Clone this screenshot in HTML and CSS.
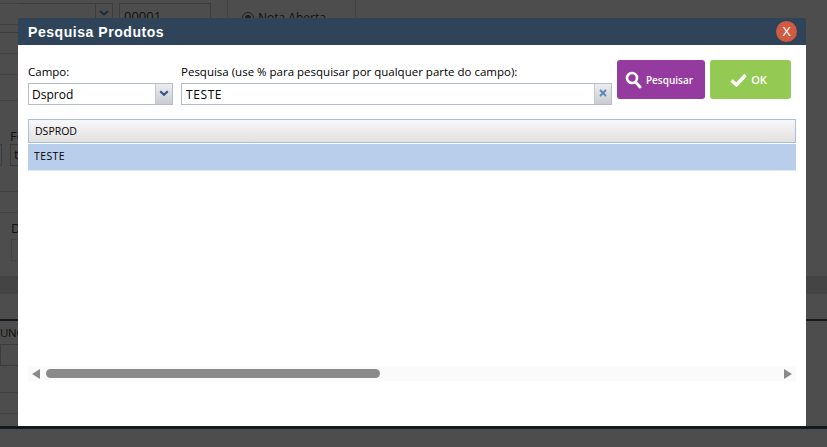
FILE: index.html
```html
<!DOCTYPE html>
<html lang="pt">
<head>
<meta charset="utf-8">
<title>Pesquisa Produtos</title>
<link rel="stylesheet" href="styles.css">
</head>
<body>
<div class="page">
  <div class="bg-top">
    <span class="bg-box bg-combo"><span class="bg-addon"><svg class="bg-arrow" width="10" height="6" viewBox="0 0 10 6"><path d="M1 1l4 3.5L9 1" fill="none" stroke="#1e2a3e" stroke-width="2"/></svg></span></span>
    <span class="bg-box bg-num">00001</span>
    <span class="bg-radio"><i class="bg-dot"></i>Nota Aberta</span>
    <i class="bg-v v1"></i>
    <i class="bg-v v2"></i>
  </div>
  <div class="bg-line l0"></div>
  <div class="bg-line l1"></div>
  <div class="bg-line l2"></div>
  <div class="bg-line l3"></div>
  <div class="bg-line l6"></div>
  <div class="bg-line l7"></div>
  <div class="bg-line l8"></div>
  <div class="bg-text t1">Fo</div>
  <div class="bg-box b1"></div>
  <div class="bg-box b2">t</div>
  <div class="bg-text t2">D</div>
  <div class="bg-box b3"></div>
  <div class="bg-band"></div>
  <div class="bg-dark d1"></div>
  <div class="bg-text t3">UNC</div>
  <div class="bg-box b4"></div>
  <div class="bg-line l4"></div>
  <div class="bg-line l5"></div>
  <div class="bg-dark d2"></div>
</div>
<div class="modal">
  <header class="modal-head">
    <h1>Pesquisa Produtos</h1>
    <span class="close">X</span>
  </header>
  <div class="modal-body">
    <div class="form">
      <div class="field campo">
        <label>Campo:</label>
        <div class="input">
          <span class="value">Dsprod</span>
          <span class="addon"><svg width="10" height="7" viewBox="0 0 10 7"><path d="M1.2 1.2L5 4.8l3.8-3.6" fill="none" stroke="#2f5288" stroke-width="2"/></svg></span>
        </div>
      </div>
      <div class="field pesquisa">
        <label>Pesquisa (use % para pesquisar por qualquer parte do campo):</label>
        <div class="input">
          <span class="value caps">TESTE</span>
          <span class="addon"><svg width="8" height="8" viewBox="0 0 8 8"><path d="M1 1l6 6M7 1L1 7" fill="none" stroke="#5b85b8" stroke-width="1.8"/></svg></span>
        </div>
      </div>
      <button class="btn purple"><svg width="17" height="18" viewBox="0 0 17 18"><circle cx="7" cy="7" r="5" fill="none" stroke="#fff" stroke-width="2.6"/><path d="M10.5 11l4.5 5" stroke="#fff" stroke-width="3" stroke-linecap="round"/></svg>Pesquisar</button>
      <button class="btn green"><svg width="17" height="14" viewBox="0 0 17 14"><path d="M1.5 7.5l5 4.5L15.5 2" fill="none" stroke="#fff" stroke-width="3.4"/></svg>OK</button>
    </div>
    <div class="grid">
      <div class="grid-head">DSPROD</div>
      <div class="grid-row">TESTE</div>
    </div>
    <div class="scrollbar">
      <svg class="arrow" width="8" height="10" viewBox="0 0 8 10"><path d="M8 0v10L0 5z" fill="#8a8a8a"/></svg>
      <div class="track"><div class="thumb"></div></div>
      <svg class="arrow" width="8" height="10" viewBox="0 0 8 10"><path d="M0 0v10l8-5z" fill="#8a8a8a"/></svg>
    </div>
  </div>
</div>
</body>
</html>
```
FILE: styles.css
```css
html, body { margin: 0; height: 100%; overflow: hidden; }
body { background: #4d4d4d; font-family: "Open Sans", "Noto Sans", sans-serif; font-size: 12px; color: #000; }
.page { position: fixed; inset: 0; background: #4d4d4d; overflow: hidden; color: #111; }
.bg-top { display: flex; height: 0; }
.bg-box { position: absolute; border: 1px solid #3c3c3c; box-sizing: border-box; }
.bg-combo { left: -2px; top: 3px; width: 115px; height: 30px; }
.bg-addon { position: absolute; right: 0; top: 0; bottom: 0; width: 16px; border-left: 1px solid #3c3c3c; }
.bg-arrow { position: absolute; left: 3px; top: 6px; }
.bg-num { left: 119px; top: 3px; width: 92px; height: 30px; padding: 3px 4px; font-size: 13px; }
.bg-radio { position: absolute; left: 242px; top: 9px; font-size: 12px; display: flex; align-items: center; gap: 4px; }
.bg-dot { display: block; width: 10px; height: 10px; border: 1px solid #222; border-radius: 50%; background: radial-gradient(circle, #222 0 3px, #4d4d4d 3.5px); }
.bg-v { position: absolute; top: 0; height: 18px; width: 1px; background: #424242; }
.v1 { left: 227px; } .v2 { left: 355px; }
.bg-line { position: absolute; left: 0; width: 18px; height: 1px; background: #424242; }
.l0 { top: 3px; } .l1 { top: 53px; } .l2 { top: 74px; } .l3 { top: 100px; }
.l6 { top: 24px; } .l7 { top: 191px; } .l8 { top: 212px; }
.bg-text { position: absolute; font-size: 12px; }
.t1 { left: 10px; top: 127px; font-size: 13px; } .t2 { left: 11px; top: 219px; font-size: 13px; } .t3 { left: 0; top: 325px; font-size: 11.5px; letter-spacing: -.3px; }
.b1 { left: -10px; top: 144px; width: 12px; height: 22px; }
.b2 { left: 10px; top: 144px; width: 20px; height: 22px; padding: 0 3px; font-size: 13px; }
.b3 { left: 11px; top: 239px; width: 20px; height: 22px; border-color: #444; }
.b4 { left: 0; top: 344px; width: 20px; height: 22px; }
.bg-band { position: absolute; left: 0; right: 0; top: 276px; height: 18px; background: #444; }
.bg-dark { position: absolute; left: 0; right: 0; background: #14191f; }
.d1 { top: 319px; height: 2px; }
.d2 { top: 426px; height: 3px; }
.l4 { top: 392px; } .l5 { top: 413px; }

.modal { position: fixed; left: 18px; top: 18px; width: 788px; height: 408px; background: #fff; z-index: 2; display: flex; flex-direction: column; }
.modal-head { height: 27px; background: #2f4459; display: flex; align-items: center; justify-content: space-between; padding: 0 9px 0 10px; flex: none; }
.modal-head h1 { margin: 0; font: bold 14px "Liberation Sans", Arial, sans-serif; color: #fff; letter-spacing: .55px; }
.close { width: 21px; height: 21px; border-radius: 50%; background: #d05a42; color: #fff; font: 13px/21px "Liberation Sans", Arial, sans-serif; text-align: center; }
.modal-body { padding: 15px 10px 0; display: flex; flex-direction: column; flex: 1; }
.form { display: flex; align-items: flex-start; height: 58px; }
.field { display: flex; flex-direction: column; }
.field label { height: 23px; line-height: 24px; font-size: 11.5px; }
.campo { width: 145px; margin-right: 8px; }
.pesquisa { width: 431px; margin-right: 5px; }
.input { height: 22px; box-sizing: border-box; border: 1px solid #b4bccd; display: flex; background: #fff; }
.value { flex: 1; font-size: 12px; line-height: 21px; padding-left: 3px; }
.caps { letter-spacing: .6px; padding-left: 4px; }
.addon { width: 17px; box-sizing: border-box; padding-bottom: 2px; background: linear-gradient(#eceded, #c9cbd0); border-left: 1px solid #c4c8d4; display: flex; align-items: center; justify-content: center; }
.btn { height: 39px; border: 0; border-radius: 3px; color: #fff; font: 600 10px "Open Sans", sans-serif; display: flex; align-items: center; justify-content: center; gap: 4px; padding: 0 4px 0 0; }
.purple { width: 88px; background: #953ba0; margin-right: 5px; }
.green { width: 81px; background: #94c954; font-size: 11px; }
.grid { margin-top: 1px; }
.grid-head { height: 24px; box-sizing: border-box; border: 1px solid #a9bedd; background: linear-gradient(#f8f7f7, #e3e0e0); font-size: 10.5px; line-height: 22px; padding-left: 6px; }
.grid-row { height: 28px; background: #b8ceeb; border-top: 1px solid #fff; border-bottom: 1px solid #e0e8f4; box-sizing: border-box; font-size: 10.5px; letter-spacing: .4px; line-height: 25px; padding-left: 6px; }
.scrollbar { margin-top: 195px; height: 15px; background: #fafafa; display: flex; align-items: center; padding: 0 4px; gap: 6px; }
.track { flex: 1; height: 9px; }
.thumb { width: 334px; height: 9px; border-radius: 5px; background: #8a8a8a; }
```
